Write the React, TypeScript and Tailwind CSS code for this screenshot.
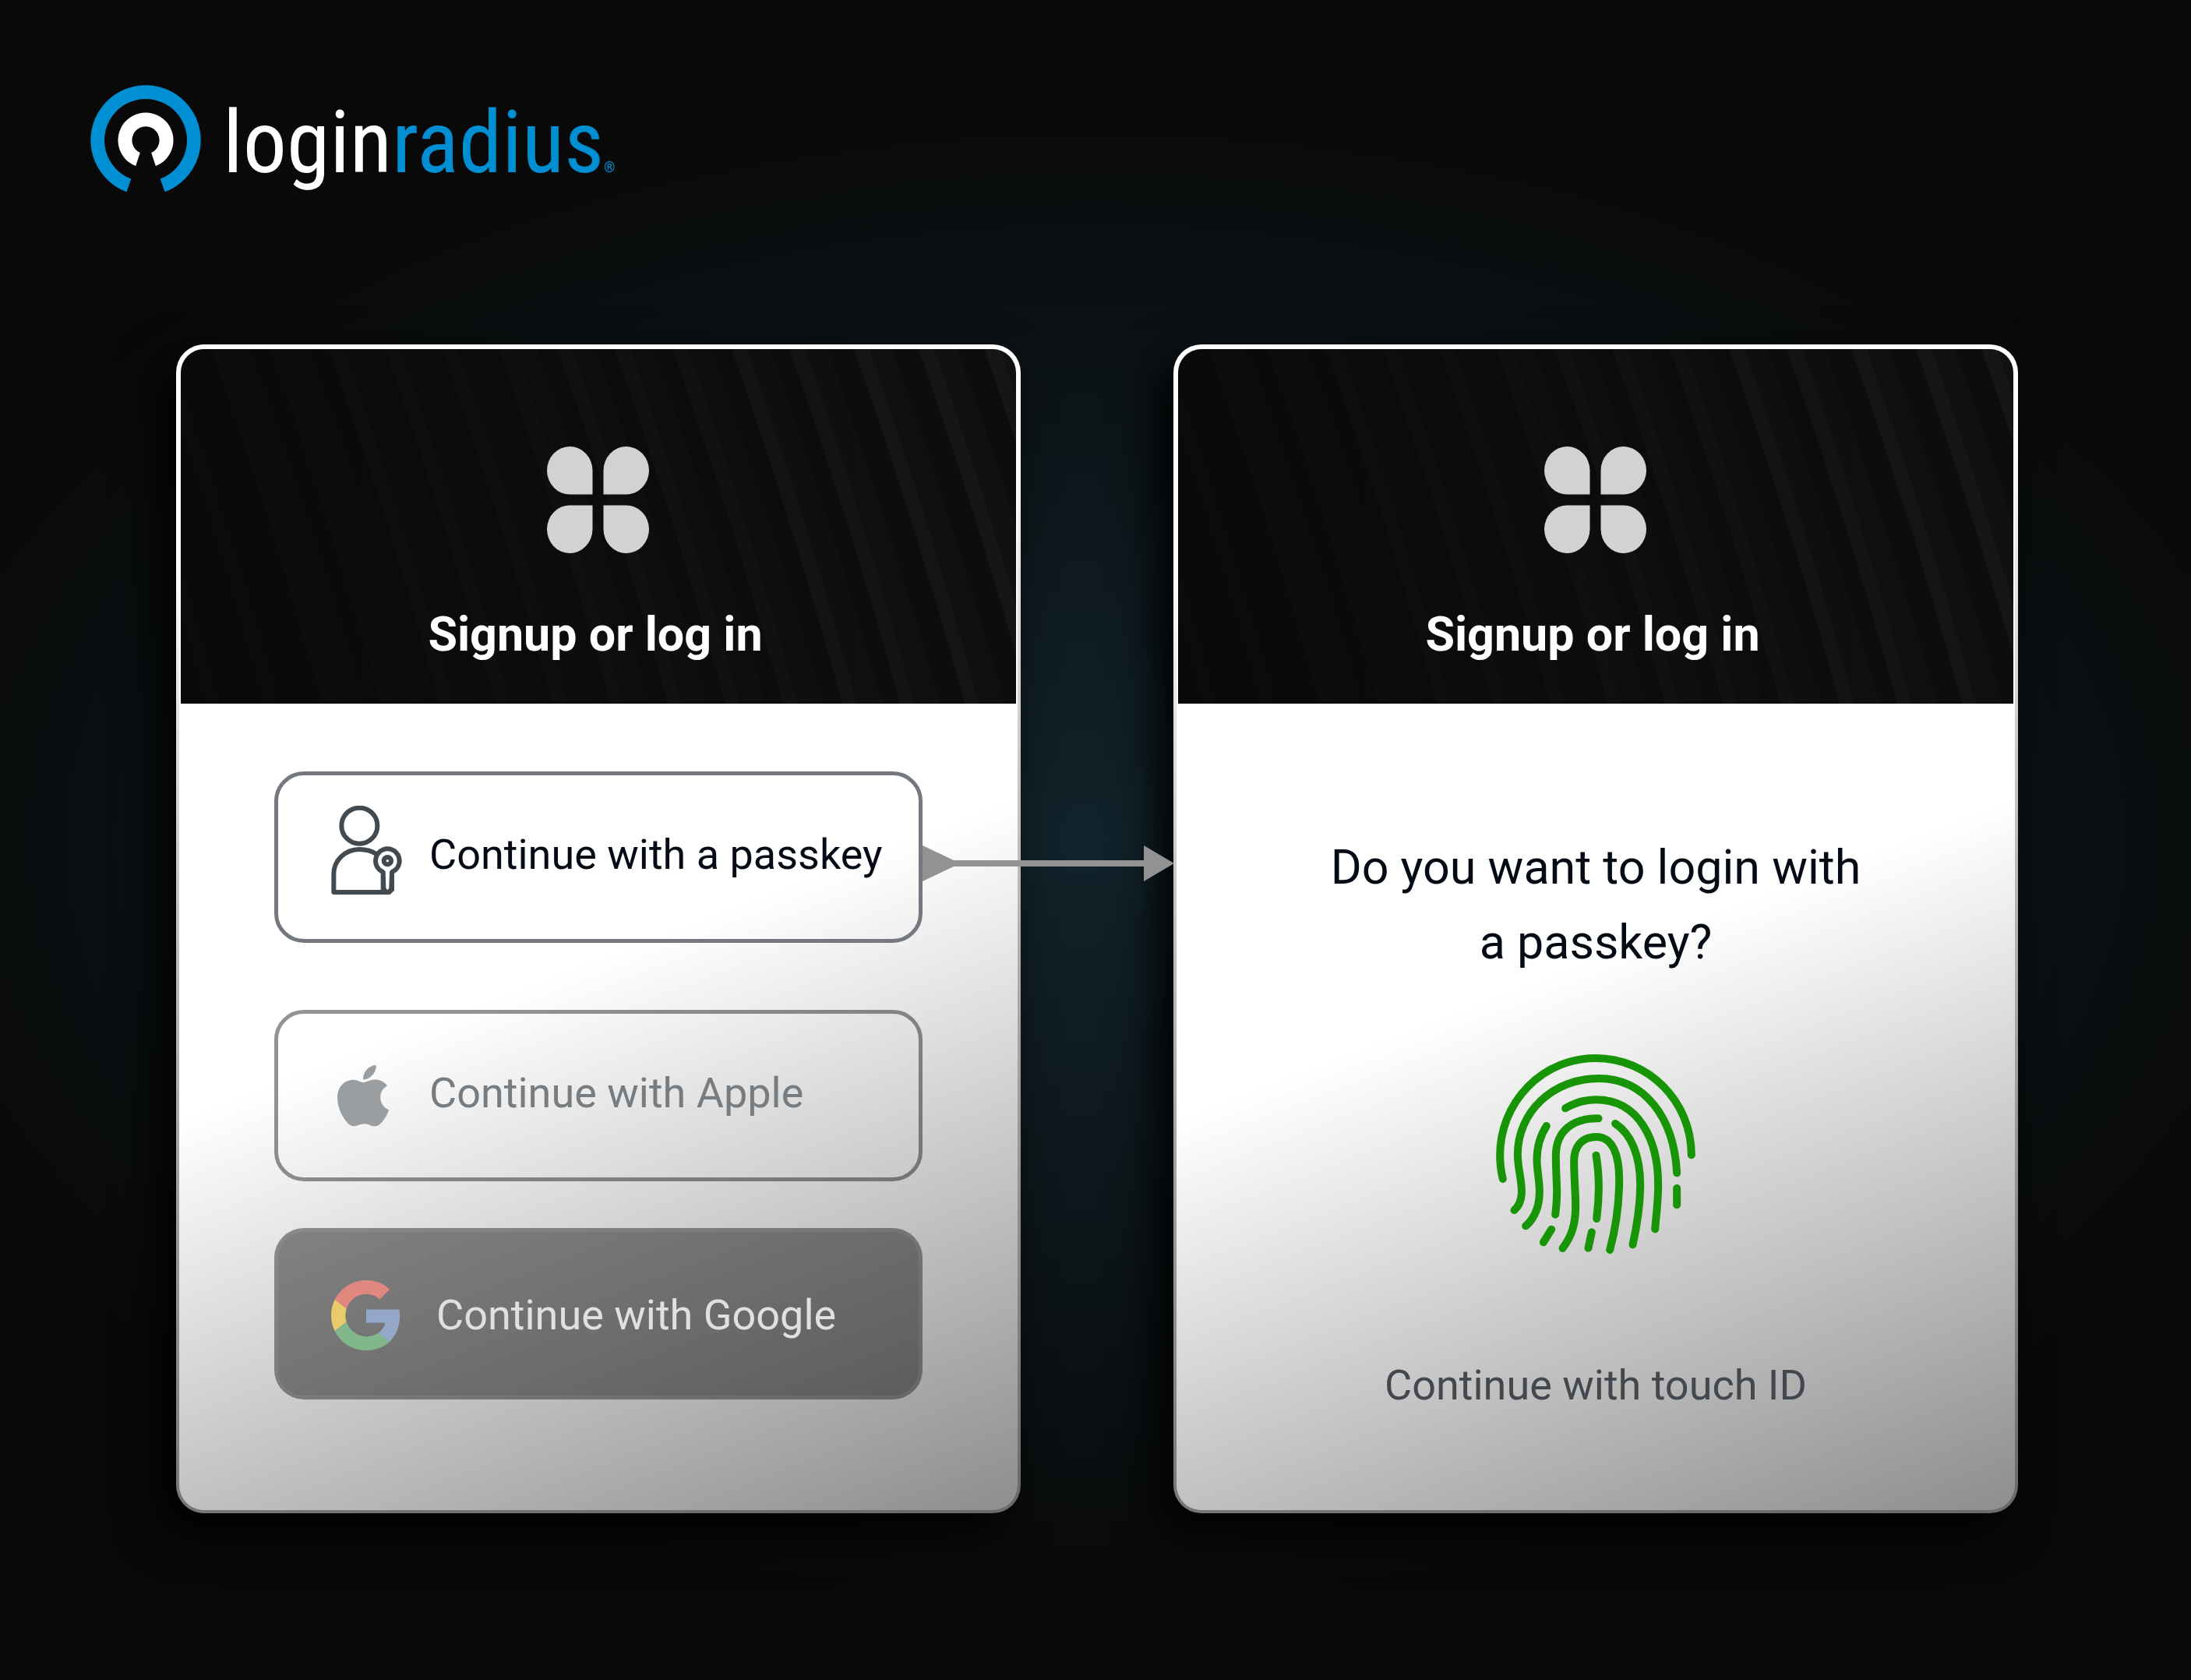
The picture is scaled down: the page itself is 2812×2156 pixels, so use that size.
import type { ReactNode } from "react";
import { FaApple } from "react-icons/fa6";

function LogoMark() {
  return (
    <svg viewBox="-71 -71 142 142" className="size-[142px] shrink-0" aria-hidden="true">
      <path
        fill="#008fd2"
        d="M-24.5 66.3 A70.7 70.7 0 1 1 24.5 66.3 L18.7 49.6 A53 53 0 1 0 -18.7 49.6 Z"
      />
      <path
        fill="#fff"
        d="M-12.8 33.1 A35.5 35.5 0 1 1 12.8 33.1 L7.2 16 A17.6 17.6 0 1 0 -7.2 16 Z"
      />
    </svg>
  );
}

function Logo() {
  return (
    <a href="#" className="flex h-[142px] w-max items-center gap-[28px]">
      <LogoMark />
      <span className="flex items-baseline pt-[6px] font-['Roboto_Condensed',sans-serif] text-[112px] leading-[136px] text-white">
        login<span className="text-[#008fd2]">radius</span>
        <span className="font-[Roboto,sans-serif] text-[18px] leading-none text-[#008fd2]">®</span>
      </span>
    </a>
  );
}

const stripes = [
  { x: -110, o: 0.014 },
  { x: -35, o: 0.014 },
  { x: 40, o: 0.016 },
  { x: 115, o: 0.018 },
  { x: 190, o: 0.02 },
  { x: 262, o: 0.022 },
  { x: 335, o: 0.024 },
  { x: 409, o: 0.026 },
  { x: 483, o: 0.028 },
  { x: 557, o: 0.03 },
  { x: 631, o: 0.034 },
  { x: 707, o: 0.038 },
  { x: 781, o: 0.042 },
  { x: 864, o: 0.044 },
  { x: 947, o: 0.046 },
  { x: 1031, o: 0.046 },
];

function HeaderStripes() {
  return (
    <svg
      viewBox="0 0 1072 455"
      preserveAspectRatio="none"
      className="absolute inset-0 size-full"
      aria-hidden="true"
    >
      {stripes.map(({ x, o }) => (
        <g key={x} fill="#fff">
          <path d={`M${x} 0 H${x + 20} Q${x + 100} 228 ${x + 160} 455 H${x + 142} Q${x + 80} 228 ${x} 0 Z`} fillOpacity={o * 0.5} />
          <path d={`M${x} 0 H${x + 50} Q${x + 130} 228 ${x + 194} 455 H${x + 142} Q${x + 80} 228 ${x} 0 Z`} fillOpacity={o * 0.4} />
        </g>
      ))}
    </svg>
  );
}

function Clover() {
  return (
    <svg viewBox="0 0 131 137" className="h-[137px] w-[131px]" fill="#d2d2d2" aria-hidden="true">
      <path d="M58.5 61.5 H30 A29.25 30.75 0 1 1 58.5 30.75 Z" />
      <path d="M72.5 61.5 H101 A29.25 30.75 0 1 0 72.5 30.75 Z" />
      <path d="M58.5 75.5 H30 A29.25 30.75 0 1 0 58.5 106.25 Z" />
      <path d="M72.5 75.5 H101 A29.25 30.75 0 1 1 72.5 106.25 Z" />
    </svg>
  );
}

function PasskeyIcon() {
  return (
    <svg viewBox="45 42 273 342" className="mb-[18px] h-[114px] w-[91px]" aria-hidden="true">
      <g fill="none" stroke="#42494f" strokeWidth="18" strokeLinejoin="round">
        <circle cx="154" cy="119" r="69" />
        <path d="M222 230 C202 216 180 210 154 210 C98 210 55 254 55 304 V375 H245" />
      </g>
      <path fill="#42494f" d="M236 290 H288 V368 L272 384 H236 Z" />
      <circle cx="262" cy="254" r="55" fill="#42494f" />
      <circle cx="262" cy="254" r="37" fill="#fff" />
      <path fill="#fff" d="M246 284 L254 296 L256 358 Q262 374 268 358 L270 296 L278 284 Z" />
      <circle cx="262" cy="254" r="23" fill="#42494f" />
      <circle cx="262" cy="254" r="5" fill="#fff" />
    </svg>
  );
}

function GoogleIcon() {
  return (
    <svg viewBox="0 0 48 48" className="mt-[4px] size-[90px]" aria-hidden="true">
      <path fill="#e08880" d="M24 9.5c3.54 0 6.71 1.22 9.21 3.6l6.85-6.85C35.9 2.38 30.47 0 24 0 14.62 0 6.51 5.38 2.56 13.22l7.98 6.19C12.43 13.72 17.74 9.5 24 9.5z" />
      <path fill="#94a7c9" d="M46.98 24.55c0-1.57-.15-3.09-.38-4.55H24v9.02h12.94c-.58 2.96-2.26 5.48-4.78 7.18l7.73 6c4.51-4.18 7.09-10.36 7.09-17.65z" />
      <path fill="#eacb6c" d="M10.53 28.59c-.48-1.45-.76-2.99-.76-4.59s.27-3.14.76-4.59l-7.98-6.19C.92 16.46 0 20.12 0 24c0 3.88.92 7.54 2.56 10.78l7.97-6.19z" />
      <path fill="#82b78b" d="M24 48c6.48 0 11.93-2.13 15.89-5.81l-7.73-6c-2.15 1.45-4.92 2.3-8.16 2.3-6.26 0-11.57-4.22-13.47-9.91l-7.98 6.19C6.51 42.62 14.62 48 24 48z" />
    </svg>
  );
}

function Fingerprint() {
  return (
    <svg
      viewBox="90 69 767 768"
      className="size-[256px]"
      fill="none"
      stroke="#189407"
      strokeWidth="30"
      strokeLinecap="round"
      aria-hidden="true"
    >
      <path d="M116 549 C108 518 105 488 105 457 A368 373 0 0 1 473 84 C677 84 842 250 842 457" />
      <path d="M160 669 C198 637 189 580 182 535 C176 500 173 480 173 455 C173 290 310 162 485 162 C660 162 775 310 786 526" />
      <path d="M357 277 C395 254 435 244 475 244 C640 244 714 400 714 570 C714 640 706 690 702 742" />
      <path d="M284 345 C255 390 247 430 247 475 C247 520 257 545 257 600 C257 650 240 700 204 730" />
      <path d="M484 316 C390 314 320 360 320 460 C320 520 324 560 324 600 C324 640 321 660 318 686" />
      <path d="M346 816 C380 770 396 725 396 655 C396 600 390 550 390 480 C390 430 415 387 476 387 C540 387 564 460 564 550 C564 650 550 740 528 822" />
      <path d="M475 458 C489 540 489 610 477 702" />
      <path d="M549 336 C610 375 645 460 645 570 C645 660 632 730 616 802" />
      <path d="M786 585 V649 M303 743 L272 793 M458 754 L445 815" />
    </svg>
  );
}

function FlowArrow() {
  return (
    <svg
      viewBox="0 0 323 46"
      className="pointer-events-none absolute top-[95px] left-full z-10 h-[46px] w-[323px]"
      fill="#929292"
      aria-hidden="true"
    >
      <path d="M0 0 L40 19 H284 V0 L323 23 L284 46 V27 H40 L0 46 Z" />
    </svg>
  );
}

function Card({ children }: { children: ReactNode }) {
  return (
    <section className="flex flex-col rounded-[36px] bg-[linear-gradient(172deg,#fff_16%,#c6c6c6_42%,#6b6b6b_98%)] p-[4px] shadow-[-20px_24px_60px_#000]">
      <div className="flex-1 rounded-[32px] bg-[linear-gradient(159deg,#fff_52%,#909090_99%)]">
        <div className="px-[2px] pt-[2px]">
          <header className="relative flex flex-col items-center overflow-hidden rounded-t-[30px] bg-[linear-gradient(90deg,#0a0a0a,#0d0d0d)] pt-[125px] pb-[49px]">
            <HeaderStripes />
            <div className="relative flex flex-col items-center gap-[64px]">
              <Clover />
              <h2 className="pr-[8px] text-[61px] leading-[80px] font-bold text-white">Signup or log in</h2>
            </div>
          </header>
        </div>
        {children}
      </div>
    </section>
  );
}

const buttonBase = "flex h-[220px] w-full items-center rounded-[38px] border-[5px] pl-[68px] text-[54px] leading-[64px]";

export default function App() {
  return (
    <main className="min-h-screen bg-[#090909] bg-[radial-gradient(ellipse_1640px_980px_at_50%_50%,#11232b,#090909)] pt-[109px] pb-[214px] font-[Roboto,sans-serif]">
      <div className="pl-[116px]">
        <Logo />
      </div>

      <div className="mt-[191px] grid grid-cols-2 gap-[196px] pr-[222px] pl-[226px]">
        <Card>
          <div className="flex flex-col px-[122px] pt-[87px] pb-[142px]">
            <div className="relative">
              <button type="button" className={`${buttonBase} gap-[35px] border-[#73797e] text-[#040b14]`}>
                <PasskeyIcon />
                <span className="pb-[6px]">Continue with a passkey</span>
              </button>
              <FlowArrow />
            </div>
            <button type="button" className={`${buttonBase} mt-[86px] gap-[35px] border-black/42 text-[#777c80]`}>
              <span className="flex w-[91px] justify-center pr-[9px]">
                <FaApple className="h-[90px] w-[68px] text-[#9a9ea1]" aria-hidden="true" />
              </span>
              <span className="pb-[6px]">Continue with Apple</span>
            </button>
            <button type="button" className={`${buttonBase} mt-[60px] gap-[45px] border-white/6 bg-black/44 text-[#e0e0e0]`}>
              <GoogleIcon />
              <span className="pt-[4px]">Continue with Google</span>
            </button>
          </div>
        </Card>

        <Card>
          <div className="flex flex-col items-center pt-[162px]">
            <p className="max-w-[760px] text-center text-[61px] leading-[96px] text-[#040b14]">
              Do you want to login with a&nbsp;passkey?
            </p>
            <div className="mt-[96px]">
              <Fingerprint />
            </div>
            <button type="button" className="mt-[137px] text-[54px] leading-[64px] text-[#42484e]">
              Continue with touch ID
            </button>
          </div>
        </Card>
      </div>
    </main>
  );
}
